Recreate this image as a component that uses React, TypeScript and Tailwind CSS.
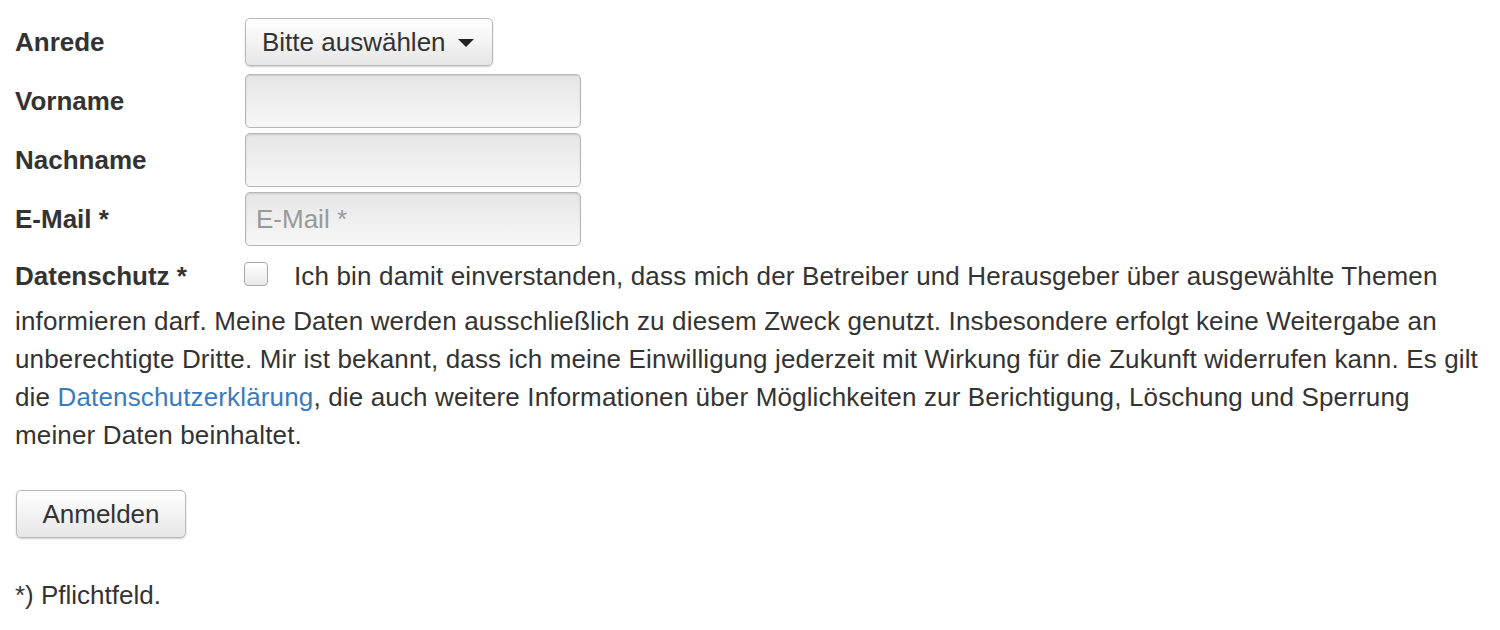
const fields = [
  { id: "vorname", label: "Vorname", placeholder: "" },
  { id: "nachname", label: "Nachname", placeholder: "" },
  { id: "email", label: "E-Mail *", placeholder: "E-Mail *" },
];

export default function App() {
  return (
    <div className="w-[1500px] h-[630px] bg-white text-[#333] font-['Liberation_Sans',Arial,sans-serif] text-[26px] pl-[15px] pt-[18px]">
      <form className="flex flex-col">
        <div className="flex items-center h-[48px]">
          <label className="w-[230px] font-bold">Anrede</label>
          <button
            type="button"
            className="h-[48px] w-[248px] flex items-center gap-[12px] pl-[16px] pr-[14px] rounded-[5px] border border-[#b8b8b8] bg-gradient-to-b from-white to-[#e6e6e6] shadow-[0_1px_2px_rgba(0,0,0,0.2)] text-[#333] whitespace-nowrap"
          >
            Bitte auswählen
            <span className="w-0 h-0 border-l-[8px] border-r-[8px] border-t-[8px] border-l-transparent border-r-transparent border-t-[#222] mt-[2px]" />
          </button>
        </div>

        {fields.map((f, i) => (
          <div key={f.id} className={`flex items-center h-[54px] ${i === 0 ? "mt-[8px]" : "mt-[5px]"}`}>
            <label htmlFor={f.id} className="w-[230px] font-bold">
              {f.label}
            </label>
            <input
              id={f.id}
              placeholder={f.placeholder}
              className="h-[54px] w-[336px] rounded-[5px] border border-[#b5b5b5] bg-gradient-to-b from-[#e6e6e6] to-[#f7f7f7] shadow-[inset_0_1px_2px_rgba(0,0,0,0.12)] px-[10px] text-[26px] text-[#555] placeholder:text-[#999] outline-none"
            />
          </div>
        ))}

        <p className="mt-[7px] w-[1482px] leading-[38px] tracking-[0.15px] text-[#333]">
          <span className="inline-block w-[229px] font-bold tracking-normal pt-[4px] pb-[7px]">Datenschutz *</span>
          <input
            type="checkbox"
            className="appearance-none inline-block align-[-1px] w-[24px] h-[24px] rounded-[4px] border border-[#aaa] bg-gradient-to-b from-white to-[#e8e8e8] mr-[26px]"
          />
          Ich bin damit einverstanden, dass mich der Betreiber und Herausgeber über ausgewählte Themen informieren darf. Meine Daten werden ausschließlich zu diesem Zweck genutzt. Insbesondere erfolgt keine Weitergabe an unberechtigte Dritte. Mir ist bekannt, dass ich meine Einwilligung jederzeit mit Wirkung für die Zukunft widerrufen kann. Es gilt die{" "}
          <a href="#" className="text-[#3a7bbd]">
            Datenschutzerklärung
          </a>
          , die auch weitere Informationen über Möglichkeiten zur Berichtigung, Löschung und Sperrung meiner Daten beinhaltet.
        </p>

        <div className="mt-[36px]">
          <button
            type="button"
            className="h-[48px] w-[170px] ml-[1px] rounded-[5px] border border-[#b8b8b8] bg-gradient-to-b from-white to-[#e6e6e6] shadow-[0_1px_2px_rgba(0,0,0,0.2)] text-[#333]"
          >
            Anmelden
          </button>
        </div>

        <p className="mt-[38px]">*) Pflichtfeld.</p>
      </form>
    </div>
  );
}
